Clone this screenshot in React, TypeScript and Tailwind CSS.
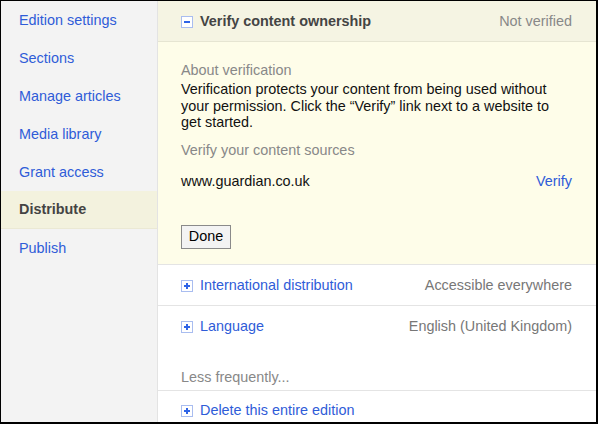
import React from "react";

const font = { fontFamily: '"Liberation Sans", Arial, Helvetica, sans-serif' };

function Box({ minus }: { minus?: boolean }) {
  return (
    <span className="flex h-[12px] w-[12px] shrink-0 items-center justify-center border border-[#a9bdf0] bg-white">
      <svg width="8" height="8" viewBox="0 0 8 8">
        <rect x="1" y="3" width="6" height="2" fill="#2f64e6" />
        {!minus && <rect x="3" y="1" width="2" height="6" fill="#2f64e6" />}
      </svg>
    </span>
  );
}

const navItems = [
  "Edition settings",
  "Sections",
  "Manage articles",
  "Media library",
  "Grant access",
  "Distribute",
  "Publish",
];

export default function App() {
  return (
    <div style={font} className="h-[425px] w-[600px] bg-white">
      <div className="flex h-[424px] w-[598px] overflow-hidden border-l border-t border-r-2 border-b-2 border-black text-[14.4px]">
        <aside className="w-[157px] shrink-0 border-r border-[#e3e3e3] bg-[#f3f3f3]">
          {navItems.map((n) =>
            n === "Distribute" ? (
              <div
                key={n}
                className="flex h-[38px] items-center border-b border-[#ebe9d4] bg-[#f3f2de] pl-[18px] pt-[1px] font-bold text-[#444]"
              >
                {n}
              </div>
            ) : (
              <div key={n} className="flex h-[38px] items-center pl-[18px] pt-[1px] text-[#2f5cd8]">
                {n}
              </div>
            )
          )}
        </aside>
        <main className="flex-1">
          <div className="flex h-[41px] items-center border-b border-[#e6e5d2] bg-[#f5f4e3] pl-[23px] pr-[24px] pt-[2px]">
            <Box minus />
            <span className="ml-[7px] font-bold text-[#444]">Verify content ownership</span>
            <span className="ml-auto text-[#888]">Not verified</span>
          </div>
          <div className="border-b border-[#e4e4e4] bg-[#fefde9] pl-[23px] pr-[24px] pb-[15px] pt-[20px]">
            <div className="leading-[17px] text-[#888]">About verification</div>
            <p className="mt-[2px] leading-[16.5px] text-[#111]">
              Verification protects your content from being used without your
              permission. Click the “Verify” link next to a website to get
              started.
            </p>
            <div className="mt-[11px] leading-[17px] text-[#888]">Verify your content sources</div>
            <div className="mt-[14px] flex leading-[17px]">
              <span className="text-[#111]">www.guardian.co.uk</span>
              <span className="ml-auto text-[#2f5cd8]">Verify</span>
            </div>
            <button className="mt-[35px] flex h-[24px] w-[50px] items-center justify-center border border-[#8a8a8a] bg-[#f3f3f3] text-[14.4px] text-black">
              Done
            </button>
          </div>
          <div className="flex h-[41px] items-center border-b border-[#e4e4e4] pl-[23px] pr-[24px] pt-[2px]">
            <Box />
            <span className="ml-[7px] text-[#2f5cd8]">International distribution</span>
            <span className="ml-auto text-[#777]">Accessible everywhere</span>
          </div>
          <div className="flex h-[40px] items-center pl-[23px] pr-[24px] pt-[2px]">
            <Box />
            <span className="ml-[7px] text-[#2f5cd8]">Language</span>
            <span className="ml-auto text-[#777]">English (United Kingdom)</span>
          </div>
          <div className="flex h-[45px] items-end border-b border-[#e4e4e4] pb-[1px] pl-[23px] text-[#888]">
            Less frequently...
          </div>
          <div className="flex h-[40px] items-center pl-[23px] pr-[24px]">
            <Box />
            <span className="ml-[7px] text-[#2f5cd8]">Delete this entire edition</span>
          </div>
        </main>
      </div>
    </div>
  );
}
